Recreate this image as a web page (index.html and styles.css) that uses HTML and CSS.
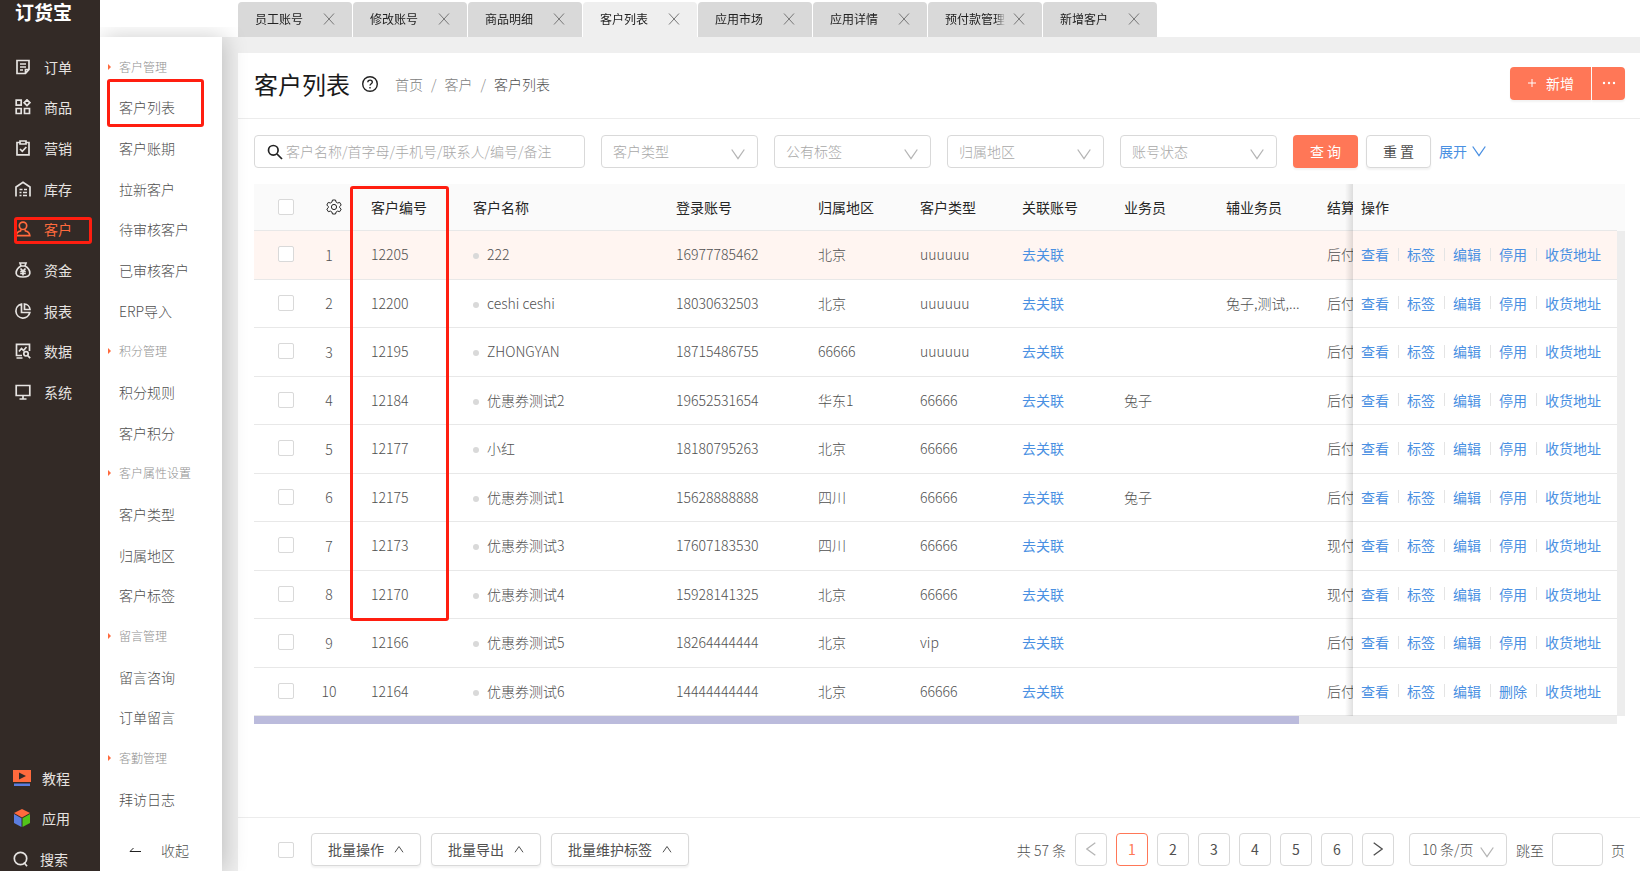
FILE: index.html
```
<!DOCTYPE html>
<html lang="zh-CN">
<head>
  <meta charset="UTF-8">
  <meta name="viewport" content="width=device-width, initial-scale=1.0">
  <title>客户列表 - 订货宝</title>
  <link rel="stylesheet" href="styles.css">
</head>
<body>
  <svg class="sprite" aria-hidden="true">
    <symbol id="i-down" viewBox="0 0 14 12"><path d="M.7 1.5 7 10.5l6.3-9"/></symbol>
    <symbol id="i-up" viewBox="0 0 10 8"><path d="M1 7.3 5 1.5l4 5.8"/></symbol>
    <symbol id="i-close" viewBox="0 0 12 12"><path d="M1 .5l10 11M11 .5L1 11.5"/></symbol>
  </svg>

  <aside class="sidebar">
    <div class="logo">订货宝</div>
    <nav class="menu">
      <a href="#"><svg viewBox="0 0 16 16"><path d="M2 1.5h12v9l-3.5 4H2zM14 10.5h-3.5v4M5 5h6M5 8h6M5 11h3"/></svg>订单</a>
      <a href="#"><svg viewBox="0 0 16 16"><path d="M1.2 1.2h5v5h-5zM1.2 9.5h5v5h-5zM9.5 9.5h5v5h-5zM12 .8 14.9 3.7 12 6.6 9.1 3.7z"/></svg>商品</a>
      <a href="#"><svg viewBox="0 0 16 16"><path d="M5 2.5H2v12.3h12V2.5h-3M5 1h6v3H5zM5 9l2.3 2.3L11.3 7"/></svg>营销</a>
      <a href="#"><svg viewBox="0 0 16 16"><path d="M1 15.5V6l7-4.7L15 6v9.5M4.5 8.5h3M9 8.5h3M4.5 11.5h2M8 11.5h4M4.5 14.5h2M8 14.5h4"/></svg>库存</a>
      <a href="#" class="active"><svg viewBox="0 0 16 16"><circle cx="8" cy="4.8" r="3.7"/><path d="M6 8.5 5.5 10C3 10.4 1.5 12 1.2 14.6h13.6C14.5 12 13 10.4 10.5 10L10 8.5"/></svg>客户</a>
      <a href="#"><svg viewBox="0 0 16 16"><path d="M5 1h6L10 4H6zM6 4C2.500 6 1 9 1.200 11.500 1.500 14 4 15 8 15s6.500-1 6.800-3.500C15 9 13.500 6 10 4M5.500 6.500 8 9.200l2.500-2.700M5.200 9.500h5.600M5.200 11.500h5.600M8 9v4.500"/></svg>资金</a>
      <a href="#"><svg viewBox="0 0 16 16"><path d="M6.500 1.200A7 7 0 1 0 14.800 9.500H6.500zM9.500 1v5.500H15A6 6 0 0 0 9.500 1z"/></svg>报表</a>
      <a href="#"><svg viewBox="0 0 16 16"><path d="M14.500 8V1.300H1.500v11.200H7M1.500 15h6M4 8.500 6.500 5.500 8.500 7.500 11.500 4"/><circle cx="11" cy="10.800" r="2.200"/><path d="m12.600 12.500 2.600 2.700"/></svg>数据</a>
      <a href="#"><svg viewBox="0 0 16 16"><path d="M1.200 1.500h13.600v10H1.200zM8 11.500V15M4.500 15h7"/></svg>系统</a>
    </nav>
    <nav class="menu menu-bottom">
      <a href="#"><svg class="color" viewBox="0 0 18 18"><path fill="#ff6a3d" d="M0 1h18v12H0z"/><path fill="#332a26" d="m6 3.500 7 3.500-7 3.500z"/><path fill="#5b7de0" d="M1 14.500h16V17H1z"/></svg>教程</a>
      <a href="#"><svg class="color" viewBox="0 0 18 18"><path fill="#ff6a3d" d="m9 0 8 4-8 4.500L1 4z"/><path fill="#5b7de0" d="m1 5 7.500 4.300V18L1 14z"/><path fill="#52c41a" d="M17 5 9.500 9.300V18l7.500-4z"/></svg>应用</a>
      <a href="#"><svg viewBox="0 0 16 16"><circle cx="7.500" cy="7.500" r="6.200"/><path d="m11 11.500 3 3.700"/></svg>搜索</a>
    </nav>
  </aside>

  <nav class="submenu">
    <h4>客户管理</h4>
    <a href="#" class="marked">客户列表</a>
    <a href="#">客户账期</a>
    <a href="#">拉新客户</a>
    <a href="#">待审核客户</a>
    <a href="#">已审核客户</a>
    <a href="#">ERP导入</a>
    <h4>积分管理</h4>
    <a href="#">积分规则</a>
    <a href="#">客户积分</a>
    <h4>客户属性设置</h4>
    <a href="#">客户类型</a>
    <a href="#">归属地区</a>
    <a href="#">客户标签</a>
    <h4>留言管理</h4>
    <a href="#">留言咨询</a>
    <a href="#">订单留言</a>
    <h4>客勤管理</h4>
    <a href="#">拜访日志</a>
    <button class="collapse"><svg viewBox="0 0 12 6"><path d="M12 4.500H1L4.500 1"/></svg>收起</button>
  </nav>

  <div class="page">
    <div class="tabs" id="tabs"></div>

    <main class="panel">
      <header class="title-bar">
        <h1>客户列表</h1>
        <svg class="help" viewBox="0 0 16 16"><circle cx="8" cy="8" r="7.300"/><path d="M5.800 6.300C5.800 3.300 10.300 3.500 10.300 6.200 10.300 7.800 8 7.800 8 9.600M8 11v1.400"/></svg>
        <div class="breadcrumb"><a href="#">首页</a><i>/</i><a href="#">客户</a><i>/</i><span>客户列表</span></div>
        <div class="add-group">
          <button class="primary add"><svg viewBox="0 0 10 10"><path d="M5 1v8M1 5h8"/></svg>新增</button>
          <button class="primary more" aria-label="更多"><svg viewBox="0 0 14 4"><circle cx="2" cy="2" r="1.200"/><circle cx="7" cy="2" r="1.200"/><circle cx="12" cy="2" r="1.200"/></svg></button>
        </div>
      </header>

      <form class="filters" onsubmit="return false">
        <label class="search">
          <svg viewBox="0 0 16 16"><circle cx="6.300" cy="6.300" r="4.800"/><path d="m10 10 5 5"/></svg>
          <input type="text" aria-label="搜索客户" placeholder="客户名称/首字母/手机号/联系人/编号/备注">
        </label>
        <label class="select"><select aria-label="客户类型"><option>客户类型</option></select><svg><use href="#i-down"/></svg></label>
        <label class="select"><select aria-label="公有标签"><option>公有标签</option></select><svg><use href="#i-down"/></svg></label>
        <label class="select"><select aria-label="归属地区"><option>归属地区</option></select><svg><use href="#i-down"/></svg></label>
        <label class="select"><select aria-label="账号状态"><option>账号状态</option></select><svg><use href="#i-down"/></svg></label>
        <div class="filter-actions">
          <button class="primary">查 询</button>
          <button class="plain">重 置</button>
          <a href="#">展开<svg><use href="#i-down"/></svg></a>
        </div>
      </form>

      <div class="table-area">
        <table>
          <colgroup>
            <col class="c-check"><col class="c-no"><col class="c-sm"><col class="c-name"><col class="c-phone"><col class="c-sm"><col class="c-sm"><col class="c-sm"><col class="c-sm"><col class="c-sm"><col><col class="c-ops">
          </colgroup>
          <thead>
            <tr>
              <th class="check"><input type="checkbox" aria-label="全选"></th>
              <th class="no"><svg class="gear" viewBox="0 0 16 16"><path d="M6.500 1h3l.6 2.100 1.500.9 2.100-.6 1.500 2.600L13.700 7.500v1.200l1.500 1.400-1.500 2.600-2.100-.6-1.500.9L9.500 15h-3l-.6-2-1.500-.9-2.100.6L.8 10.100l1.500-1.400V7.500L.8 6l1.500-2.600 2.100.6 1.500-.9z"/><circle cx="8" cy="8" r="2.600"/></svg></th>
              <th>客户编号</th>
              <th>客户名称</th>
              <th>登录账号</th>
              <th>归属地区</th>
              <th>客户类型</th>
              <th>关联账号</th>
              <th>业务员</th>
              <th>辅业务员</th>
              <th class="settle">结算</th>
              <th class="ops">操作</th>
            </tr>
          </thead>
          <tbody id="rows"></tbody>
        </table>
        <div class="v-track"></div>
        <div class="h-track"><div class="h-thumb"></div></div>
        <div class="mark"></div>
      </div>

      <footer class="footer">
        <input type="checkbox" aria-label="全选本页">
        <button class="plain batch">批量操作<svg><use href="#i-up"/></svg></button>
        <button class="plain batch">批量导出<svg><use href="#i-up"/></svg></button>
        <button class="plain batch">批量维护标签<svg><use href="#i-up"/></svg></button>
        <div class="pager">
          <span>共 57 条</span>
          <button class="num prev" aria-label="上一页"><svg viewBox="0 0 10 14"><path d="M9.300.700.800 7l8.500 6.300"/></svg></button>
          <button class="num current">1</button>
          <button class="num">2</button>
          <button class="num">3</button>
          <button class="num">4</button>
          <button class="num">5</button>
          <button class="num">6</button>
          <button class="num next" aria-label="下一页"><svg viewBox="0 0 10 14"><path d="M.700.700 9.200 7 .700 13.300"/></svg></button>
          <label class="select size"><select aria-label="每页条数"><option>10 条/页</option></select><svg><use href="#i-down"/></svg></label>
          <label class="jump">跳至<input type="text">页</label>
        </div>
      </footer>
    </main>
  </div>

  <script>
    const tabs = ["员工账号", "修改账号", "商品明细", "客户列表", "应用市场", "应用详情", "预付款管理", "新增客户"];

    // 编号, 名称, 登录账号, 地区, 类型, 业务员, 辅业务员, 结算
    const customers = [
      ["12205", "222", "16977785462", "北京", "uuuuuu", "", "", "后付"],
      ["12200", "ceshi ceshi", "18030632503", "北京", "uuuuuu", "", "兔子,测试,...", "后付"],
      ["12195", "ZHONGYAN", "18715486755", "66666", "uuuuuu", "", "", "后付"],
      ["12184", "优惠券测试2", "19652531654", "华东1", "66666", "兔子", "", "后付"],
      ["12177", "小红", "18180795263", "北京", "66666", "", "", "后付"],
      ["12175", "优惠券测试1", "15628888888", "四川", "66666", "兔子", "", "后付"],
      ["12173", "优惠券测试3", "17607183530", "四川", "66666", "", "", "现付"],
      ["12170", "优惠券测试4", "15928141325", "北京", "66666", "", "", "现付"],
      ["12166", "优惠券测试5", "18264444444", "北京", "vip", "", "", "后付"],
      ["12164", "优惠券测试6", "14444444444", "北京", "66666", "", "", "后付"]
    ];

    document.getElementById('tabs').innerHTML = tabs.map(t => `
      <div class="tab${t === "客户列表" ? " on" : ""}">
        <a href="#">${t}</a>
        <button aria-label="关闭${t}"><svg><use href="#i-close"/></svg></button>
      </div>`).join('');

    document.getElementById('rows').innerHTML = customers.map((c, i) => {
      const ops = ["查看", "标签", "编辑", i === 9 ? "删除" : "停用", "收货地址"];
      return `<tr>
        <td class="check"><input type="checkbox" aria-label="选择${c[0]}"></td>
        <td class="no">${i + 1}</td>
        <td>${c[0]}</td>
        <td><span class="dot"></span>${c[1]}</td>
        <td>${c[2]}</td>
        <td>${c[3]}</td>
        <td>${c[4]}</td>
        <td><a href="#">去关联</a></td>
        <td>${c[5]}</td>
        <td>${c[6]}</td>
        <td class="settle">${c[7]}</td>
        <td class="ops"><div>${ops.map(o => `<a href="#">${o}</a>`).join('')}</div></td>
      </tr>`;
    }).join('');
  </script>
</body>
</html>
```
FILE: styles.css
```
* {
  box-sizing: border-box;
}

body {
  margin: 0;
  display: flex;
  height: 100vh;
  overflow: hidden;
  font-family: "Noto Sans CJK SC", sans-serif;
  font-size: 14px;
  font-weight: 300;
  line-height: 20px;
  color: #505050;
  background: #efefef;
}

a {
  color: #4a90e2;
  text-decoration: none;
}

button, input, select {
  font: inherit;
  color: inherit;
}

button {
  cursor: pointer;
  padding: 0;
  border: none;
  background: none;
}

svg {
  flex: none;
  fill: none;
  stroke: currentColor;
}

.sprite {
  position: absolute;
  width: 0;
  height: 0;
}

/* 左侧主菜单 */
.sidebar {
  flex: none;
  width: 100px;
  display: flex;
  flex-direction: column;
  background: #332a26;
  color: #e6e3e1;
}

.logo {
  height: 46px;
  padding-left: 15px;
  font-size: 19px;
  font-weight: bold;
  line-height: 24px;
  color: #fff;
}

.menu {
  display: grid;
  grid-auto-rows: 41px 40px 41px;
}

.menu a {
  position: relative;
  display: flex;
  align-items: center;
  gap: 13px;
  padding-left: 15px;
  color: inherit;
  font-weight: 400;
}

.menu svg {
  width: 16px;
  height: 16px;
  stroke-width: 1.7;
}

.menu svg.color {
  width: 18px;
  height: 18px;
  stroke: none;
}

.menu .active {
  color: #ff6a3d;
}

.menu .active::after,
.submenu .marked::after,
.mark {
  content: "";
  position: absolute;
  border: 3px solid #ff1e10;
  border-radius: 3px;
}

.menu .active::after {
  inset: 8px 8px 5px 14px;
}

.menu-bottom {
  margin-top: auto;
  margin-bottom: -8px;
}

.menu-bottom a {
  padding-left: 13px;
  gap: 11px;
}

/* 二级菜单 */
.submenu {
  flex: none;
  position: relative;
  z-index: 2;
  width: 122px;
  margin-top: 37px;
  padding-top: 9px;
  display: grid;
  grid-auto-rows: 41px 40px 41px;
  background: #fff;
  box-shadow: 3px 0 22px rgba(0, 0, 0, 0.2);
  clip-path: inset(-10px -30px 0 0);
}

.submenu a, .submenu h4 {
  position: relative;
  display: flex;
  align-items: center;
  margin: 0;
  padding-left: 19px;
  color: #505050;
}

.submenu h4 {
  font-size: 12px;
  font-weight: 300;
  color: #909090;
}

.submenu h4::before {
  content: "";
  position: absolute;
  left: 8px;
  border: 3px solid transparent;
  border-left-color: #ff6a3d;
  border-right: none;
}

.submenu .marked::after {
  inset: -8px 18px 0 7px;
}

.collapse {
  display: flex;
  align-items: center;
  gap: 20px;
  padding: 21px 0 0 29px;
}

.collapse svg {
  width: 12px;
  height: 6px;
  color: #222;
}

/* 页签 */
.page {
  flex: 1;
  min-width: 0;
  display: flex;
  flex-direction: column;
}

.tabs {
  display: flex;
  gap: 1px;
  height: 37px;
  margin-left: -122px;
  padding: 2px 0 0 138px;
  background: #fff;
}

.tab {
  width: 114px;
  display: flex;
  align-items: center;
  justify-content: space-between;
  padding: 0 17px 2px;
  border-radius: 4px 4px 0 0;
  background: #d9d9d9;
  font-size: 12px;
  font-weight: 400;
}

.tab.on {
  background: #efefef;
}

.tab a {
  width: 61px;
  overflow: hidden;
  white-space: nowrap;
  color: #222;
  mask-image: linear-gradient(90deg, #000 50px, transparent);
}

.tab svg {
  display: block;
  width: 12px;
  height: 12px;
  color: #777;
}

/* 内容区 */
.panel {
  flex: 1;
  min-height: 0;
  margin: 16px 0 0 16px;
  display: flex;
  flex-direction: column;
  background: #fff;
}

.title-bar {
  display: flex;
  align-items: center;
  height: 66px;
  padding: 0 15px 4px 16px;
  border-bottom: 1px solid #ececec;
}

h1 {
  margin: 0 12px 0 0;
  font-size: 24px;
  font-weight: 400;
  line-height: 32px;
  color: #1a1a1a;
}

.help {
  width: 16px;
  height: 16px;
  color: #222;
  stroke-width: 1.4;
}

.breadcrumb {
  margin-left: 17px;
}

.breadcrumb a {
  color: #808080;
}

.breadcrumb i {
  margin: 0 8px;
  font-style: normal;
  color: #8c8c8c;
}

.add-group {
  display: flex;
  gap: 1px;
  margin-left: auto;
}

.primary, .plain {
  display: flex;
  align-items: center;
  justify-content: center;
  min-width: 65px;
  height: 33px;
  padding-bottom: 2px;
  border-radius: 4px;
  box-shadow: 0 2px 2px rgba(0, 0, 0, 0.05);
  font-weight: 400;
}

.primary {
  background: #ff7757;
  color: #fff;
}

.plain {
  border: 1px solid #d9d9d9;
  background: #fff;
}

.add {
  width: 81px;
  gap: 9px;
  border-radius: 4px 0 0 4px;
}

.add svg {
  width: 10px;
  height: 10px;
}

.more {
  min-width: 33px;
  border-radius: 0 4px 4px 0;
}

.more svg {
  width: 14px;
  height: 4px;
  fill: currentColor;
  stroke: none;
}

.filters {
  display: flex;
  gap: 16px;
  padding: 16px;
}

.search, .select {
  display: flex;
  align-items: center;
  height: 33px;
  border: 1px solid #d9d9d9;
  border-radius: 4px;
  background: #fff;
}

.search {
  width: 331px;
  padding-left: 12px;
  gap: 3px;
}

.search svg {
  width: 16px;
  height: 16px;
  color: #222;
  stroke-width: 1.7;
}

.search input {
  flex: 1;
  min-width: 0;
  padding: 0 0 2px;
  border: none;
  outline: none;
}

.search input::placeholder {
  color: #a8a8a8;
}

.select {
  position: relative;
  width: 157px;
}

.select select {
  width: 100%;
  height: 100%;
  padding: 0 30px 2px 11px;
  appearance: none;
  border: none;
  background: none;
  color: #a8a8a8;
}

.select svg {
  position: absolute;
  right: 12px;
  top: 12px;
  width: 14px;
  height: 12px;
  color: #b5b5b5;
  stroke-width: 1.3;
  pointer-events: none;
}

.filter-actions {
  display: flex;
  gap: 8px;
}

.filter-actions a {
  display: flex;
  align-items: center;
  gap: 5px;
  padding-bottom: 2px;
}

.filter-actions svg {
  width: 14px;
  height: 12px;
  stroke-width: 1.3;
}

/* 表格 */
.table-area {
  position: relative;
  display: grid;
  grid-template-columns: 1fr 8px;
  margin: 0 15px 0 16px;
  background: linear-gradient(#fafafa 47px, #fff 47px);
}

table {
  width: 100%;
  height: 532px;
  table-layout: fixed;
  border-collapse: separate;
  border-spacing: 0;
}

.c-check { width: 60px; }
.c-no { width: 49px; }
.c-sm { width: 102px; }
.c-name { width: 203px; }
.c-phone { width: 142px; }
.c-ops { width: 264px; }

th, td {
  padding: 0 8px 1px;
  border-bottom: 1px solid #e8e8e8;
  text-align: left;
  white-space: nowrap;
  background: #fff;
}

th {
  height: 47px;
  font-weight: 400;
  color: #262626;
  background: #fafafa;
}

td a, .filter-actions a {
  font-weight: 400;
}

tbody tr:first-child td {
  background: #fff5f1;
}

.check {
  padding-left: 24px;
}

.no {
  padding: 0 19px 0 0;
  text-align: center;
}

th.no {
  padding-right: 9px;
}

.settle {
  padding-left: 7px;
  padding-right: 0;
  overflow: hidden;
}

.gear {
  display: block;
  width: 16px;
  height: 16px;
  margin: 0 auto;
}

input[type="checkbox"] {
  display: block;
  flex: none;
  width: 16px;
  height: 16px;
  margin: 0;
  appearance: none;
  border: 1px solid #d9d9d9;
  border-radius: 2px;
  background: #fff;
}

.dot {
  display: inline-block;
  width: 6px;
  height: 6px;
  margin: 0 8px 1px 0;
  border-radius: 50%;
  background: #d9d9d9;
}

.ops {
  position: relative;
}

.ops::before {
  content: "";
  position: absolute;
  top: 0;
  bottom: -1px;
  left: -8px;
  width: 8px;
  background: linear-gradient(90deg, transparent, rgba(0, 0, 0, 0.12));
}

.ops div {
  display: flex;
}

.ops a + a {
  margin-left: 9px;
  padding-left: 9px;
  background: linear-gradient(#e4e4e4, #e4e4e4) left center / 1px 13px no-repeat;
}

.v-track {
  margin-top: 47px;
  background: #ededed;
}

.h-track {
  height: 8px;
  background: #ededed;
}

.h-thumb {
  width: 76.7%;
  height: 100%;
  background: #bbbbdc;
}

.mark {
  left: 96px;
  top: 2px;
  width: 99px;
  height: 435px;
}

/* 底部操作与分页 */
.footer {
  display: flex;
  align-items: center;
  gap: 10px;
  margin-top: auto;
  padding: 15px 15px 5px 40px;
  border-top: 1px solid #ececec;
}

.footer > input {
  margin-right: 7px;
}

.batch {
  padding: 0 16px 2px;
  gap: 10px;
}

.batch svg {
  width: 10px;
  height: 8px;
}

.pager {
  display: flex;
  align-items: center;
  gap: 9px;
  margin-left: auto;
}

.num {
  display: flex;
  align-items: center;
  justify-content: center;
  width: 32px;
  height: 33px;
  padding-bottom: 1px;
  border: 1px solid #d9d9d9;
  border-radius: 4px;
  font-weight: 400;
}

.num svg {
  width: 10px;
  height: 14px;
  stroke-width: 1.3;
}

.num.prev {
  color: #b5b5b5;
}

.num.current {
  border-color: #ff7757;
  color: #ff7757;
}

.size {
  width: 98px;
  margin-left: 6px;
}

.size select {
  padding: 0 12px 2px;
  color: #505050;
}

.jump {
  display: flex;
  align-items: center;
  gap: 8px;
}

.jump input {
  width: 51px;
  height: 33px;
  padding: 0 8px;
  border: 1px solid #d9d9d9;
  border-radius: 4px;
}
```
